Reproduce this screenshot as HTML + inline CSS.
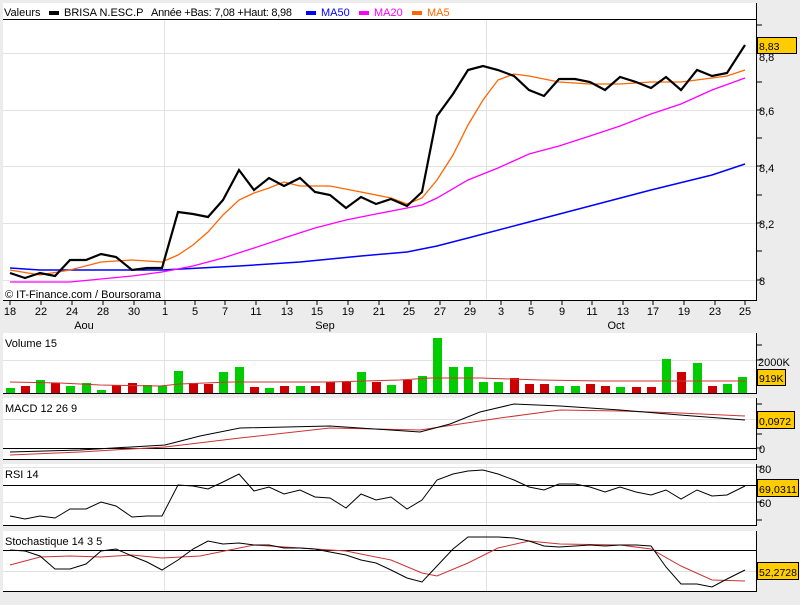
<!DOCTYPE html>
<html><head><meta charset="utf-8"><style>
body{margin:0;background:#ececec;width:800px;height:600px;overflow:hidden;font-family:"Liberation Sans",sans-serif}
svg text{font-family:"Liberation Sans",sans-serif;font-size:11px}
svg text.b{font-size:10.5px}
</style></head><body>
<svg width="800" height="600" xmlns="http://www.w3.org/2000/svg">
<rect width="800" height="600" fill="#ececec"/>
<rect x="3" y="3" width="753" height="297" fill="#fff"/>
<rect x="3" y="333" width="753" height="60" fill="#fff"/>
<rect x="3" y="398" width="753" height="61" fill="#fff"/>
<rect x="3" y="464" width="753" height="61" fill="#fff"/>
<rect x="3" y="531" width="753" height="60" fill="#fff"/>
<g stroke="#e2e2e2" stroke-width="1">
<line x1="164.5" y1="20" x2="164.5" y2="300"/><line x1="486.5" y1="20" x2="486.5" y2="300"/>
<line x1="3" y1="53.5" x2="756" y2="53.5"/><line x1="3" y1="110.5" x2="756" y2="110.5"/><line x1="3" y1="166.5" x2="756" y2="166.5"/><line x1="3" y1="223.5" x2="756" y2="223.5"/><line x1="3" y1="280.5" x2="756" y2="280.5"/>
<line x1="164.5" y1="333" x2="164.5" y2="393"/><line x1="486.5" y1="333" x2="486.5" y2="393"/>
<line x1="3" y1="360.5" x2="756" y2="360.5"/>
<line x1="164.5" y1="398" x2="164.5" y2="459"/><line x1="486.5" y1="398" x2="486.5" y2="459"/>
<line x1="3" y1="419.5" x2="756" y2="419.5"/>
<line x1="164.5" y1="464" x2="164.5" y2="525"/><line x1="486.5" y1="464" x2="486.5" y2="525"/>
<line x1="3" y1="467.5" x2="756" y2="467.5"/><line x1="3" y1="502.5" x2="756" y2="502.5"/>
<line x1="164.5" y1="531" x2="164.5" y2="591"/><line x1="486.5" y1="531" x2="486.5" y2="591"/>
<line x1="3" y1="571.5" x2="756" y2="571.5"/>
</g>
<g stroke="#000" stroke-width="1">
<line x1="3" y1="19.5" x2="756" y2="19.5"/>
<line x1="3" y1="300.5" x2="756" y2="300.5"/>
<line x1="3" y1="393.5" x2="756" y2="393.5"/>
<line x1="3" y1="448.5" x2="756" y2="448.5"/>
<line x1="3" y1="459.5" x2="756" y2="459.5"/>
<line x1="3" y1="485.5" x2="756" y2="485.5"/>
<line x1="3" y1="525.5" x2="756" y2="525.5"/>
<line x1="3" y1="550.5" x2="756" y2="550.5"/>
<line x1="3" y1="591.5" x2="756" y2="591.5"/>
<line x1="756.5" y1="3" x2="756.5" y2="301"/>
<line x1="756.5" y1="333" x2="756.5" y2="394"/>
<line x1="756.5" y1="398" x2="756.5" y2="460"/>
<line x1="756.5" y1="464" x2="756.5" y2="526"/>
<line x1="756.5" y1="531" x2="756.5" y2="592"/>
<path d="M756 25h6M756 53h6M756 82h6M756 110h6M756 138h6M756 166h6M756 195h6M756 223h6M756 251h6M756 280h6M756 345h6M756 360h6M756 378h6M756 404h6M756 419h6M756 434h6M756 448h6M756 467h6M756 485h6M756 502h6M756 520h6M756 571h6"/>
<path d="M10 300v5M41 300v5M72 300v5M103 300v5M134 300v5M165 300v5M195 300v5M225 300v5M256 300v5M287 300v5M317 300v5M348 300v5M379 300v5M409 300v5M440 300v5M470 300v5M501 300v5M531 300v5M562 300v5M592 300v5M623 300v5M653 300v5M684 300v5M715 300v5M745 300v5"/>
</g>
<text x="4" y="16">Valeurs</text>
<rect x="49" y="11" width="10" height="4" fill="#000"/>
<text x="64" y="16">BRISA N.ESC.P</text>
<text x="151" y="16" textLength="141">Année +Bas: 7,08 +Haut: 8,98</text>
<rect x="306" y="11" width="10" height="4" fill="#00f"/><text x="321" y="16" fill="#00f">MA50</text>
<rect x="359" y="11" width="10" height="4" fill="#f0f"/><text x="374" y="16" fill="#f0f">MA20</text>
<rect x="412" y="11" width="10" height="4" fill="#f60"/><text x="427" y="16" fill="#f60">MA5</text>
<text x="5" y="298" font-size="10">© IT-Finance.com / Boursorama</text>
<g text-anchor="middle">
<text x="10" y="315">18</text><text x="41" y="315">22</text><text x="72" y="315">24</text><text x="103" y="315">28</text><text x="134" y="315">30</text><text x="165" y="315">1</text><text x="195" y="315">5</text><text x="225" y="315">7</text><text x="256" y="315">11</text><text x="287" y="315">13</text><text x="317" y="315">15</text><text x="348" y="315">19</text><text x="379" y="315">21</text><text x="409" y="315">25</text><text x="440" y="315">27</text><text x="470" y="315">29</text><text x="501" y="315">3</text><text x="531" y="315">5</text><text x="562" y="315">9</text><text x="592" y="315">11</text><text x="623" y="315">13</text><text x="653" y="315">17</text><text x="684" y="315">19</text><text x="715" y="315">23</text><text x="745" y="315">25</text>
<text x="84" y="329">Aou</text><text x="325" y="329">Sep</text><text x="616" y="329">Oct</text>
</g>
<g>
<text x="759" y="61">8,8</text><text x="759" y="115">8,6</text><text x="759" y="172">8,4</text><text x="759" y="228">8,2</text><text x="759" y="285">8</text>
<text x="758" y="366">2000K</text><text x="759" y="453">0</text><text x="759" y="473">80</text><text x="759" y="507">60</text>
</g>
<text x="5" y="347">Volume 15</text>
<text x="5" y="412">MACD 12 26 9</text>
<text x="5" y="478">RSI 14</text>
<text x="5" y="545">Stochastique 14 3 5</text>
<polyline fill="none" stroke="#00f" stroke-width="1.5" points="10,268 40,270 101,270 162,270 239,266 300,262 361,256 407,252 437,246 468,238 529,222 590,206 651,190 712,175 745,164"/>
<polyline fill="none" stroke="#f0f" stroke-width="1.3" points="10,282 70,282 132,276 162,272 193,266 223,258 254,248 284,238 315,228 346,220 376,214 407,208 422,205 437,198 468,180 498,168 529,154 559,146 590,136 620,126 651,114 681,104 712,90 745,78"/>
<polyline fill="none" stroke="#f60" stroke-width="1.3" points="10,270 40,275 70,270 101,262 132,260 162,262 178,255 193,245 208,232 223,215 239,200 254,193 269,188 284,182 300,186 330,186 361,192 391,198 407,204 422,198 437,180 453,155 468,125 483,100 498,80 514,74 529,76 559,82 590,84 620,84 651,82 681,82 712,78 727,76 745,70"/>
<polyline fill="none" stroke="#000" stroke-width="2.2" points="10,273 25,278 40,273 55,276 70,260 86,260 101,254 116,257 132,270 147,268 162,268 178,212 193,214 208,217 223,200 239,170 254,190 269,178 284,186 300,178 315,192 330,195 346,208 361,197 376,204 391,199 407,206 422,192 437,116 453,94 468,70 483,66 498,70 514,76 529,90 544,96 559,79 575,79 590,82 605,90 620,77 636,82 651,88 666,77 681,90 697,70 712,76 727,73 745,45"/>
<g>
<rect x="6" y="388" width="9" height="5" fill="#0c0"/><rect x="21" y="386" width="9" height="7" fill="#c00"/><rect x="36" y="380" width="9" height="13" fill="#0c0"/><rect x="51" y="383" width="9" height="10" fill="#c00"/><rect x="66" y="386" width="9" height="7" fill="#0c0"/><rect x="82" y="383" width="9" height="10" fill="#0c0"/><rect x="97" y="390" width="9" height="3" fill="#0c0"/><rect x="112" y="385" width="9" height="8" fill="#c00"/><rect x="128" y="383" width="9" height="10" fill="#c00"/><rect x="143" y="385" width="9" height="8" fill="#0c0"/><rect x="158" y="386" width="9" height="7" fill="#0c0"/><rect x="174" y="371" width="9" height="22" fill="#0c0"/><rect x="189" y="383" width="9" height="10" fill="#c00"/><rect x="204" y="384" width="9" height="9" fill="#c00"/><rect x="219" y="372" width="9" height="21" fill="#0c0"/><rect x="235" y="367" width="9" height="26" fill="#0c0"/><rect x="250" y="387" width="9" height="6" fill="#c00"/><rect x="265" y="388" width="9" height="5" fill="#0c0"/><rect x="280" y="386" width="9" height="7" fill="#c00"/><rect x="296" y="386" width="9" height="7" fill="#0c0"/><rect x="311" y="386" width="9" height="7" fill="#c00"/><rect x="326" y="382" width="9" height="11" fill="#c00"/><rect x="342" y="382" width="9" height="11" fill="#c00"/><rect x="357" y="372" width="9" height="21" fill="#0c0"/><rect x="372" y="382" width="9" height="11" fill="#c00"/><rect x="387" y="385" width="9" height="8" fill="#0c0"/><rect x="403" y="380" width="9" height="13" fill="#c00"/><rect x="418" y="376" width="9" height="17" fill="#0c0"/><rect x="433" y="338" width="9" height="55" fill="#0c0"/><rect x="449" y="367" width="9" height="26" fill="#0c0"/><rect x="464" y="367" width="9" height="26" fill="#0c0"/><rect x="479" y="382" width="9" height="11" fill="#0c0"/><rect x="494" y="382" width="9" height="11" fill="#0c0"/><rect x="510" y="378" width="9" height="15" fill="#c00"/><rect x="525" y="384" width="9" height="9" fill="#c00"/><rect x="540" y="384" width="9" height="9" fill="#c00"/><rect x="555" y="386" width="9" height="7" fill="#0c0"/><rect x="571" y="386" width="9" height="7" fill="#0c0"/><rect x="586" y="384" width="9" height="9" fill="#c00"/><rect x="601" y="386" width="9" height="7" fill="#c00"/><rect x="616" y="387" width="9" height="6" fill="#0c0"/><rect x="632" y="387" width="9" height="6" fill="#c00"/><rect x="647" y="387" width="9" height="6" fill="#c00"/><rect x="662" y="359" width="9" height="34" fill="#0c0"/><rect x="677" y="372" width="9" height="21" fill="#c00"/><rect x="693" y="363" width="9" height="30" fill="#0c0"/><rect x="708" y="386" width="9" height="7" fill="#c00"/><rect x="723" y="384" width="9" height="9" fill="#0c0"/><rect x="738" y="377" width="9" height="16" fill="#0c0"/>
</g>
<polyline fill="none" stroke="#c33" stroke-width="1" points="10,382 60,383 100,385 160,386 180,384 230,382 330,382 400,380 430,378 480,378 540,380 600,381 660,381 670,381 745,381"/>
<polyline fill="none" stroke="#c33" stroke-width="1" points="10,455 80,452 165,447 240,438 330,428 420,430 500,418 560,410 620,411 680,413 745,416"/>
<polyline fill="none" stroke="#000" stroke-width="1" points="10,452 80,450 165,445 200,436 240,428 330,426 420,432 450,424 480,412 514,404 560,406 620,410 680,415 745,420"/>
<polyline fill="none" stroke="#000" stroke-width="1" points="10,516 25,519 40,516 55,518 70,509 86,509 101,502 116,506 132,517 147,516 162,516 178,485 193,486 208,489 223,482 239,474 254,491 269,487 284,494 300,490 315,497 330,498 346,508 361,494 376,500 391,497 407,509 422,500 437,480 453,474 468,471 483,470 498,474 514,480 529,487 544,490 559,484 575,484 590,487 605,492 620,487 636,492 651,495 666,490 681,499 697,490 712,496 727,495 745,486"/>
<polyline fill="none" stroke="#c33" stroke-width="1" points="10,565 40,557 70,556 101,557 132,555 162,558 200,556 254,545 300,548 346,551 391,560 422,573 437,576 468,563 498,548 529,541 560,544 620,545 651,549 681,566 712,580 745,581"/>
<polyline fill="none" stroke="#000" stroke-width="1" points="10,550 25,551 40,556 55,569 70,569 86,564 101,551 116,549 132,556 147,562 162,570 178,560 193,549 208,541 223,544 239,543 254,545 269,545 284,548 300,548 315,549 330,552 346,555 361,560 376,563 391,570 407,578 422,582 437,566 453,549 468,537 483,537 498,537 514,538 529,541 544,546 559,547 575,546 590,545 605,546 620,545 636,545 651,546 666,567 681,584 697,584 712,587 727,579 745,570"/>
<g stroke="#000" stroke-width="1" fill="#ffcc00">
<rect x="757.5" y="37.5" width="39" height="16"/>
<rect x="757.5" y="369.5" width="28" height="16"/>
<rect x="757.5" y="411.5" width="37" height="17"/>
<rect x="757.5" y="479.5" width="41" height="17"/>
<rect x="757.5" y="562.5" width="41" height="17"/>
</g>
<text class="b" x="759" y="50">8,83</text>
<text class="b" x="759" y="382">919K</text>
<text class="b" x="759" y="425">0,0972</text>
<text class="b" x="759" y="493" textLength="38">69,0311</text>
<text class="b" x="759" y="576" textLength="38">52,2728</text>
</svg>
</body></html>
